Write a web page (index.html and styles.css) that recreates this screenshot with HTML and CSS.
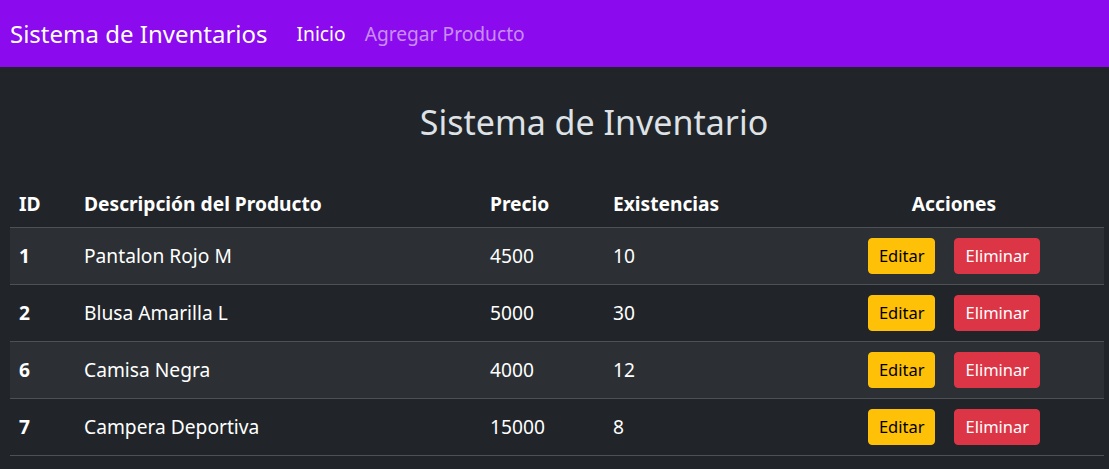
FILE: index.html
```html
<!DOCTYPE html>
<html lang="es">
<head>
<meta charset="utf-8">
<title>Sistema de Inventarios</title>
<link rel="stylesheet" href="styles.css">
</head>
<body>
<nav class="navbar">
  <span class="brand">Sistema de Inventarios</span>
  <a class="nav-link active" href="#">Inicio</a>
  <a class="nav-link" href="#">Agregar Producto</a>
</nav>
<main class="content">
  <h2 class="title">Sistema de Inventario</h2>
  <table class="inv-table">
    <colgroup>
      <col class="c-id"><col class="c-desc"><col class="c-price"><col class="c-stock"><col class="c-act">
    </colgroup>
    <thead>
      <tr><th class="first">ID</th><th>Descripción del Producto</th><th>Precio</th><th>Existencias</th><th class="center">Acciones</th></tr>
    </thead>
    <tbody>
      <tr><th class="first">1</th><td>Pantalon Rojo M</td><td>4500</td><td>10</td><td class="center"><span class="btn btn-warn">Editar</span><span class="btn btn-danger">Eliminar</span></td></tr>
      <tr><th class="first">2</th><td>Blusa Amarilla L</td><td>5000</td><td>30</td><td class="center"><span class="btn btn-warn">Editar</span><span class="btn btn-danger">Eliminar</span></td></tr>
      <tr><th class="first">6</th><td>Camisa Negra</td><td>4000</td><td>12</td><td class="center"><span class="btn btn-warn">Editar</span><span class="btn btn-danger">Eliminar</span></td></tr>
      <tr><th class="first">7</th><td>Campera Deportiva</td><td>15000</td><td>8</td><td class="center"><span class="btn btn-warn">Editar</span><span class="btn btn-danger">Eliminar</span></td></tr>
    </tbody>
  </table>
</main>
</body>
</html>
```
FILE: styles.css
```css
* { box-sizing: border-box; }
html, body { margin: 0; padding: 0; }
body {
  background: #212529;
  color: #dee2e6;
  font-family: "Noto Sans", "Open Sans", sans-serif;
  font-size: 16px;
  overflow: hidden;
}
.navbar {
  height: 67px;
  background: #8b0aee;
  display: flex;
  align-items: center;
  padding: 0 10px;
}
.brand {
  font-size: 24px;
  line-height: 36px;
  color: #fff;
  margin-right: 29px;
}
.nav-link {
  font-size: 19.2px;
  line-height: 29px;
  color: rgba(255, 255, 255, 0.55);
  text-decoration: none;
  margin-right: 19px;
}
.nav-link.active { color: #fff; }
.content {
  padding: 35px 5px 0 10px;
}
.title {
  margin: 0 0 38px;
  padding-left: 74px;
  text-align: center;
  font-size: 34px;
  line-height: 40px;
  font-weight: 400;
  color: #dee2e6;
}
.inv-table {
  width: 1094px;
  border-collapse: collapse;
  table-layout: fixed;
  color: #fff;
  font-size: 19.2px;
}
.c-id { width: 66px; }
.c-desc { width: 406px; }
.c-price { width: 123px; }
.c-stock { width: 199px; }
.c-act { width: 300px; }
.inv-table th, .inv-table td {
  text-align: left;
  padding: 9px 8px;
  line-height: 28px;
  vertical-align: middle;
}
.inv-table thead th { font-weight: 700; padding: 10px 8px 9px; }
.inv-table tbody th { font-weight: 700; }
.inv-table tbody td, .inv-table tbody th { padding: 10px 8px; height: 57px; }
.inv-table .first { padding-left: 9px; }
.inv-table tr { border-bottom: 1px solid #4d5154; }
.inv-table tbody tr:nth-child(odd) { background: #2c3034; }
.inv-table .center { text-align: center; }
.btn {
  display: inline-block;
  vertical-align: middle;
  font-size: 16.5px;
  line-height: 22px;
  padding: 6px 10px;
  border: 1px solid transparent;
  border-radius: 4px;
}
.btn + .btn { margin-left: 19px; }
.btn-warn { background: #ffc107; border-color: #ffc107; color: #000; }
.btn-danger { background: #dc3545; border-color: #dc3545; color: #fff; }
```
